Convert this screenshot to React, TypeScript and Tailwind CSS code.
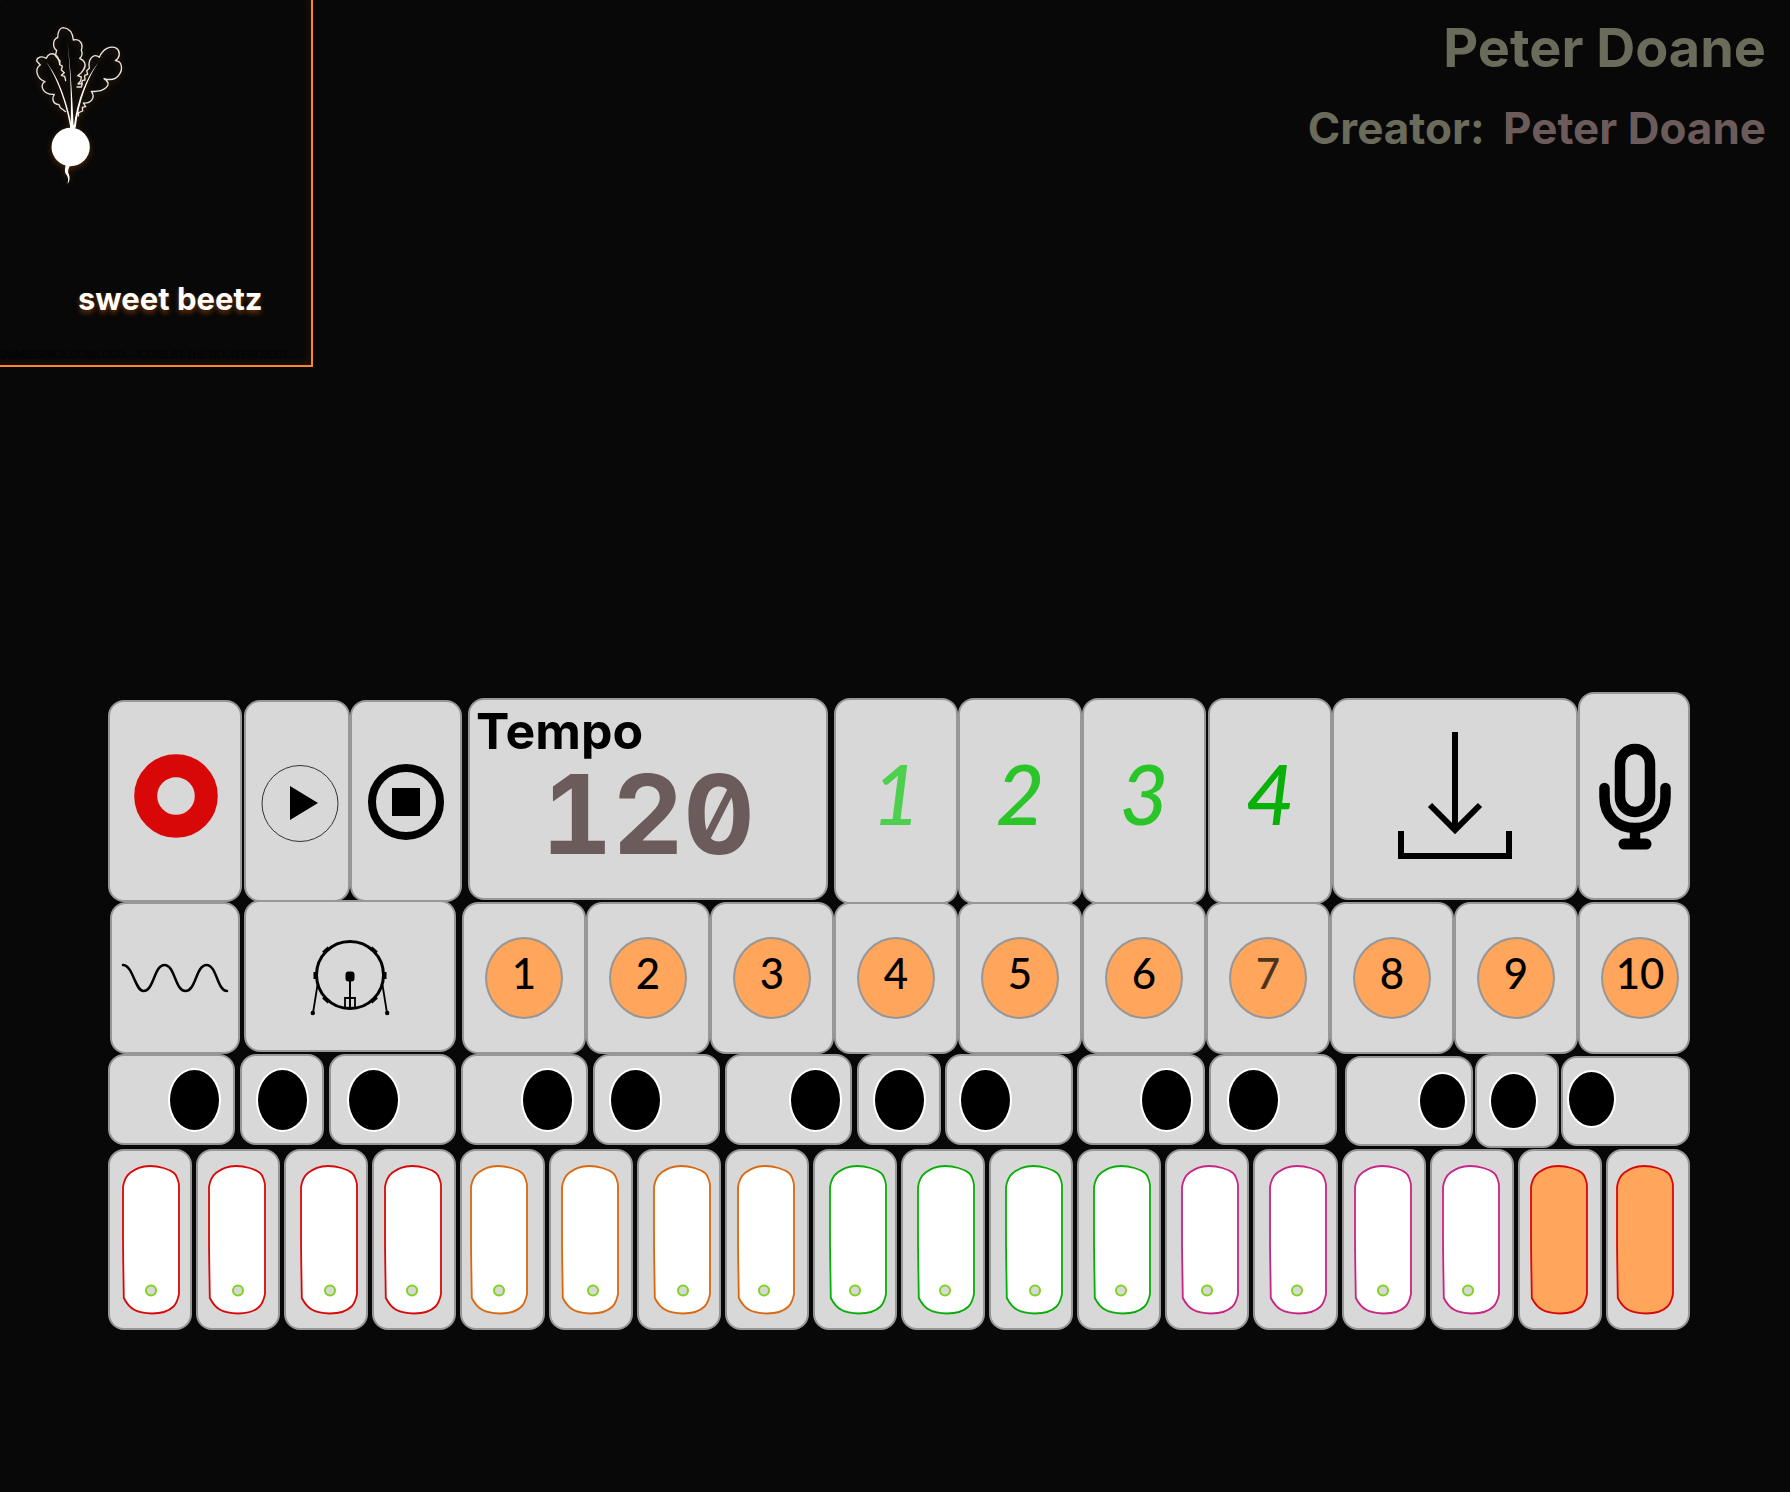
import type { ReactNode } from "react";

const CELL = "rounded-2xl border-2 border-[#979797] bg-[#d8d8d8]";

function Cell({ label, className, children }: { label: string; className: string; children: ReactNode }) {
  return (
    <button type="button" aria-label={label} className={`${CELL} flex min-w-0 cursor-pointer items-center ${className}`}>
      {children}
    </button>
  );
}

function BeetLogo() {
  return (
    <svg
      viewBox="0 0 360 540"
      className="h-[180px] w-[120px] drop-shadow-[0_2px_3px_rgba(160,80,0,0.45)]"
      fill="none"
      stroke="#e8e6e4"
      strokeWidth="4"
      strokeLinejoin="round"
      strokeLinecap="round"
      aria-hidden="true"
    >
      <path d="M137 197 L134 184 L124 181 L133 173 L124 165 L127 153 L119 149 L120 138 L106 122 L110 106 C97 98 98 72 113 68 C114 45 122 38 130 38 C148 40 158 52 160 75 C181 70 190 88 184 105 C188 116 184 126 179 130 C196 137 200 152 190 165 L184 173 L173 182 L184 186 L182 198 L174 207 L187 206 L184 216 L171 216" />
      <path d="M119 146 C116 132 112 122 106 120 C95 112 83 118 79 130 C66 122 50 126 50 138 L61 150 C44 160 48 190 75 200 C58 208 66 240 103 238 C94 252 100 268 117 269 L121 278 L137 290" />
      <path d="M184 206 L188 196 L195 195 L194 181 L203 178 L200 167 L208 160 L207 148 C208 128 224 114 238 127 C248 102 272 90 290 100 C302 110 300 128 286 137 C308 138 308 165 298 178 C288 194 270 196 252 191 C284 210 248 232 214 229 C228 248 212 266 190 264 L197 275 L187 277 L188 288 L176 293 L175 303" />
      <g fill="#fff" stroke="none">
        <path d="M142 80 C151 150 157 240 161 336 L152 336 C155 240 150 150 142 80Z" />
        <path d="M79 142 C112 180 142 260 156 337 L151 337 C139 265 109 184 79 142Z" />
        <path d="M236 142 C205 185 177 255 167 338 L161 338 C171 255 200 185 236 142Z" />
        <path d="M150 330 h15 v14 h-15Z" />
        <circle cx="152" cy="396" r="57.500" />
        <path d="M137 446 C135 465 132 470 140 480 C145 488 146 497 142 506 C149 500 151 488 146 476 C142 465 147 460 152 446Z" />
      </g>
    </svg>
  );
}

function RecordIcon() {
  return (
    <svg viewBox="0 0 88 96" className="h-[96px] w-[88px]" aria-hidden="true">
      <circle cx="45" cy="43" r="30.300" fill="none" stroke="#d90808" strokeWidth="23" />
    </svg>
  );
}

function PlayIcon() {
  return (
    <svg viewBox="0 0 84 84" className="h-[84px] w-[84px]" aria-hidden="true">
      <circle cx="45" cy="44.500" r="38" fill="none" stroke="#333" strokeWidth="1" />
      <path d="M35 27 L63 44 L35 61Z" />
    </svg>
  );
}

function StopIcon() {
  return (
    <svg viewBox="0 0 84 84" className="h-[84px] w-[84px]" aria-hidden="true">
      <circle cx="42" cy="43" r="34" fill="none" stroke="#000" strokeWidth="8" />
      <rect x="28" y="29" width="28" height="28" />
    </svg>
  );
}

function DownloadIcon() {
  return (
    <svg viewBox="0 0 120 134" className="h-[134px] w-[120px]" fill="none" stroke="#000" strokeWidth="6" aria-hidden="true">
      <path d="M60 0 V97" />
      <path d="M35 73 L60 98 L85 73" />
      <path d="M6 99 V124 H114 V99" />
    </svg>
  );
}

function MicIcon() {
  return (
    <svg viewBox="-2 -1 76 108" className="h-[108px] w-[76px]" fill="none" stroke="#000" strokeWidth="10.500" strokeLinecap="round" aria-hidden="true">
      <rect x="22" y="6" width="30" height="63" rx="15" />
      <path d="M6.500 45 V54 C6.500 73 19 85 37 85 C55 85 67.500 73 67.500 54 V45" />
      <path d="M37 86 V98" strokeLinecap="butt" />
      <path d="M26 101 H48" strokeWidth="11" />
    </svg>
  );
}

function WaveIcon() {
  return (
    <svg viewBox="0 0 108 32" className="h-8 w-[108px]" fill="none" stroke="#000" strokeWidth="2.500" strokeLinecap="round" aria-hidden="true">
      <path d="M2 3 C12 3 14 29 22.500 29 C33 29 33 3 43.500 3 C54 3 54 29 64.500 29 C75 29 75 3 85.500 3 C96 3 96 29 106 29" />
    </svg>
  );
}

function DrumIcon() {
  return (
    <svg viewBox="0 0 80 80" className="h-20 w-20" fill="none" stroke="#000" aria-hidden="true">
      <circle cx="40" cy="39" r="33.500" strokeWidth="3" />
      <path d="M7.500 49 L3 77 M72.500 49 L77 77" strokeWidth="1.800" />
      <g strokeWidth="4">
        <path d="M5.500 36 V43 M74.500 36 V43" />
        <path d="M13.500 17 L19 12 M61 12 L66.500 17" />
        <path d="M13.500 61 L19 66 M61 66 L66.500 61" />
      </g>
      <path d="M40 43 V72" strokeWidth="2" />
      <path d="M35 72 V62 H45 V72" strokeWidth="1.800" />
      <g fill="#000" stroke="none">
        <rect x="35.500" y="35.500" width="9" height="10" rx="3" />
        <circle cx="2.800" cy="77" r="2.200" />
        <circle cx="77.200" cy="77" r="2.200" />
      </g>
    </svg>
  );
}

const pads = [
  { n: 1, style: "text-[#4dd04d]" },
  { n: 2, style: "text-[#29c529]" },
  { n: 3, style: "mr-0.5 text-[#29c529]" },
  { n: 4, style: "text-[#08b008]" },
];

const patterns = [1, 2, 3, 4, 5, 6, 7, 8, 9, 10];

const sharps = [
  { note: "C#1", cell: "mr-[5px] justify-end pr-3" },
  { note: "D#1", cell: "mr-[5px] justify-center" },
  { note: "F#1", cell: "mr-[5px] pl-4" },
  { note: "G#1", cell: "mr-[5px] justify-end pr-3" },
  { note: "A#1", cell: "mr-[5px] pl-3.5" },
  { note: "C#2", cell: "mr-[5px] justify-end pr-2" },
  { note: "D#2", cell: "mr-1 justify-center" },
  { note: "F#2", cell: "mr-1 pl-3" },
  { note: "G#2", cell: "mr-1 justify-end pr-2.5" },
  { note: "A#2", cell: "mr-2 pl-4" },
];

const highSharps = [
  { note: "C#3", cell: "mr-0.5 mt-0.5 h-[90px] justify-end pr-1" },
  { note: "D#3", cell: "mr-0.5 h-[94px] pl-3" },
  { note: "F#3", cell: "mt-0.5 h-[90px] pb-1 pl-1" },
];

const RED = "#d90808";
const ORANGE = "#d9680e";
const GREEN = "#08ae08";
const PINK = "#c92484";

const keys = [
  { color: RED, shift: "ml-3", dot: 29 },
  { color: RED, shift: "ml-2.5", dot: 30 },
  { color: RED, shift: "ml-3.5", dot: 30 },
  { color: RED, shift: "ml-2.5", dot: 28 },
  { color: ORANGE, shift: "ml-2", dot: 29 },
  { color: ORANGE, shift: "ml-2.5", dot: 32 },
  { color: ORANGE, shift: "ml-3.5", dot: 30 },
  { color: ORANGE, shift: "ml-2.5", dot: 27 },
  { color: GREEN, shift: "ml-3.5", dot: 26 },
  { color: GREEN, shift: "ml-3.5", dot: 28 },
  { color: GREEN, shift: "ml-3.5", dot: 30 },
  { color: GREEN, shift: "ml-3.5", dot: 28 },
  { color: PINK, shift: "ml-3.5", dot: 26 },
  { color: PINK, shift: "ml-3.5", dot: 28 },
  { color: PINK, shift: "ml-2.5", dot: 29 },
  { color: PINK, shift: "ml-2.5", dot: 26 },
  { color: RED, shift: "ml-2.5", dot: 0 },
  { color: RED, shift: "ml-2", dot: 0 },
];

function KeyCap({ color, dot }: { color: string; dot: number }) {
  return (
    <svg viewBox="0 0 58 150" className="h-[150px] w-[58px] shrink-0" aria-hidden="true">
      <path
        d="M1 22 C2 15 4 11 8.500 7.500 C14 4 19 1 28 1 C37 1 47 4 52 8 C54.500 10 57 17 57 21 V129 C56 134 54 139 51.500 141.500 C46 147 39 148.500 30 148.500 C15 148 8 145 1.800 133 C1.500 110 1 90 1 70Z"
        fill={dot ? "#fff" : "#ffa55c"}
        stroke={color}
        strokeWidth="1.800"
      />
      {dot > 0 && <circle cx={dot} cy="125.500" r="5" fill="#d8d8d8" stroke="#7ed321" strokeWidth="2" />}
    </svg>
  );
}

export default function App() {
  return (
    <div className="min-h-screen bg-[#080808] font-[Inter,sans-serif]">
      <header className="flex items-start justify-between">
        <a
          href="#home"
          className="flex h-[367px] w-[313px] shrink-0 flex-col overflow-hidden border-r-2 border-b-2 border-[#f8882b] shadow-[inset_-3px_-3px_6px_rgba(120,50,0,0.2)]"
        >
          <span className="mt-[15px] ml-5">
            <BeetLogo />
          </span>
          <span className="mt-[84px] ml-[78px] text-[31px] leading-10 font-bold whitespace-nowrap text-white [text-shadow:0_3px_5px_rgba(150,70,0,0.7)]">
            sweet beetz
          </span>
          <small className="mt-7 mr-[21px] self-end font-['Liberation_Sans',sans-serif] text-[10px] leading-4 whitespace-nowrap text-[#030202]">
            SQUARESPACE.COM/LOGO – ICONS BY THE NOUN PROJECT.
          </small>
        </a>
        <div className="pt-3.5 pr-6 text-right font-bold whitespace-nowrap text-[#6b6b5b]">
          <h1 className="text-[54px] leading-[68px]">Peter Doane</h1>
          <p className="mt-3 text-[44px] leading-[68px]">
            Creator: <span className="ml-2 text-[#6b5b5b]">Peter Doane</span>
          </p>
        </div>
      </header>

      <main className="mt-[325px] pr-[100px] pb-[162px] pl-[108px]">
        <div className="grid h-[210px] grid-cols-[136fr_106fr_118fr_366fr_124fr_124fr_126fr_124fr_246fr_112fr] items-start">
          <Cell label="Record" className="mt-2 mr-0.5 h-[202px] justify-center">
            <RecordIcon />
          </Cell>
          <Cell label="Play" className="mt-2 h-[202px] justify-center">
            <PlayIcon />
          </Cell>
          <Cell label="Stop" className="mt-2 mr-1.5 h-[202px] justify-center">
            <StopIcon />
          </Cell>
          <section className={`${CELL} mt-1.5 mr-1.5 h-[202px] min-w-0 font-bold`}>
            <h2 className="px-1.5 text-[50px] leading-[62px] text-black">Tempo</h2>
            <output aria-label="Tempo" className="block text-center text-[110px] leading-[104px] text-[#6b5b5b] slashed-zero tabular-nums">
              120
            </output>
          </section>
          {pads.map((pad) => (
            <Cell
              key={pad.n}
              label={`Pad ${pad.n}`}
              className={`mt-1.5 h-[206px] justify-center pb-4 font-[Lato,sans-serif] text-[84px] leading-none font-medium italic ${pad.style}`}
            >
              {pad.n}
            </Cell>
          ))}
          <Cell label="Download" className="mt-1.5 h-[202px] justify-center">
            <DownloadIcon />
          </Cell>
          <Cell label="Microphone" className="h-[208px] justify-center">
            <MicIcon />
          </Cell>
        </div>

        <div className="grid h-[152px] grid-cols-[136fr_218fr_repeat(9,124fr)_112fr]">
          <Cell label="Synth" className="mr-1 ml-0.5 justify-center">
            <WaveIcon />
          </Cell>
          <Cell label="Drums" className="-mt-0.5 mr-1.5 mb-0.5 justify-center">
            <DrumIcon />
          </Cell>
          {patterns.map((n) => (
            <Cell key={n} label={`Pattern ${n}`} className="pl-[21px]">
              <span
                className={`flex h-[82px] w-[78px] shrink-0 items-center justify-center rounded-[50%] border-2 border-[#979797] bg-[#ffa55c] pb-2.5 font-[Lato,sans-serif] text-[42px] leading-none font-medium ${n === 7 ? "text-[#4d331c]" : "text-black"}`}
              >
                {n}
              </span>
            </Cell>
          ))}
        </div>

        <div className="grid h-[91px] grid-cols-[132fr_89fr_132fr_132fr_132fr_132fr_88fr_132fr_132fr_136fr_130fr_86fr_129fr] items-start">
          {sharps.map((k) => (
            <Cell key={k.note} label={k.note} className={`h-[91px] ${k.cell}`}>
              <span className="h-16 w-[53px] shrink-0 rounded-[50%] border-2 border-white bg-black" />
            </Cell>
          ))}
          {highSharps.map((k) => (
            <Cell key={k.note} label={k.note} className={k.cell}>
              <span className="h-[58px] w-[49px] shrink-0 rounded-[50%] border-2 border-white bg-black" />
            </Cell>
          ))}
        </div>

        <div className="mt-1 grid h-[181px] grid-cols-18 gap-1">
          {keys.map((k, i) => (
            <Cell key={i} label={`Key ${i + 1}`} className="">
              <span className={k.shift}>
                <KeyCap color={k.color} dot={k.dot} />
              </span>
            </Cell>
          ))}
        </div>
      </main>
    </div>
  );
}
